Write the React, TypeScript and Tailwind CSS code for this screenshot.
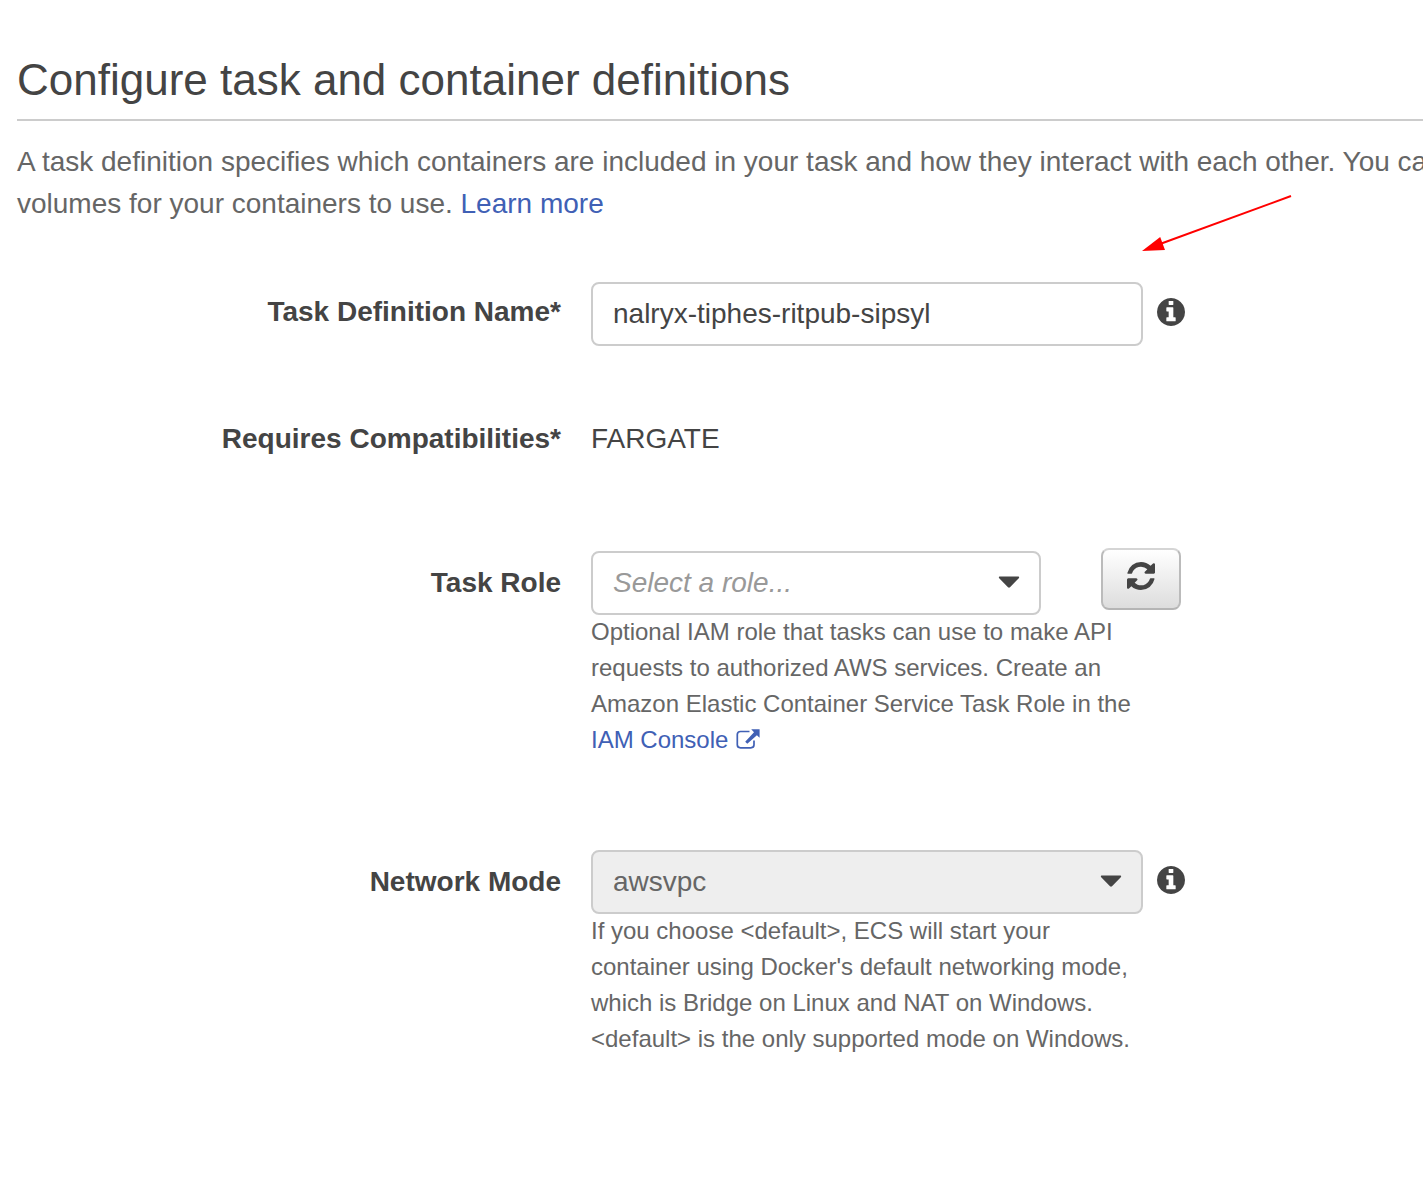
import React from "react";

const FIELD = "h-16 w-full rounded-lg border-2 border-[#ccc] px-5 text-[28px] outline-none";
const ROW = "grid grid-cols-[minmax(0,544px)_minmax(0,1fr)] gap-x-[30px]";
const LABEL = "text-right font-bold";
const HELP = "-mt-px max-w-[552px] text-[24px] leading-9 text-[#666]";

function InfoButton({ label }: { label: string }) {
  return (
    <button type="button" aria-label={label} className="flex h-[60px] shrink-0 items-center self-start">
      <svg viewBox="128 128 1536 1536" className="size-7" fill="currentColor" aria-hidden="true">
        <path d="M1152 1376v-160q0-14-9-23t-23-9h-96v-512q0-14-9-23t-23-9h-320q-14 0-23 9t-9 23v160q0 14 9 23t23 9h96v320h-96q-14 0-23 9t-9 23v160q0 14 9 23t23 9h448q14 0 23-9t9-23zm-128-896v-160q0-14-9-23t-23-9h-192q-14 0-23 9t-9 23v160q0 14 9 23t23 9h192q14 0 23-9t9-23zm640 416q0 209-103 385.5t-279.5 279.5-385.5 103-385.5-103-279.5-279.5-103-385.5 103-385.5 279.5-279.5 385.5-103 385.5 103 279.5 279.5 103 385.5z" />
      </svg>
    </button>
  );
}

function Caret() {
  return (
    <svg
      viewBox="0 0 22 12"
      className="pointer-events-none absolute top-[25px] right-[21px] h-3 w-[22px]"
      fill="#444"
      aria-hidden="true"
    >
      <path d="M1.6 0.5h18.8q1.3 0.5 0.4 1.7l-8.8 9q-1 0.9-2 0l-8.8-9q-0.9-1.2 0.4-1.7z" />
    </svg>
  );
}

function RefreshIcon() {
  return (
    <svg viewBox="128 128 1536 1536" className="size-7" fill="currentColor" aria-hidden="true">
      <path d="M1639 1056q0 5-1 7-64 268-268 434.5t-478 166.5q-146 0-282.5-55t-243.5-157l-129 129q-19 19-45 19t-45-19-19-45v-448q0-26 19-45t45-19h448q26 0 45 19t19 45-19 45l-137 137q71 66 161 102t187 36q134 0 250-65t186-179q11-17 53-117 8-23 30-23h192q13 0 22.5 9.5t9.5 22.5zm25-800v448q0 26-19 45t-45 19h-448q-26 0-45-19t-19-45 19-45l138-138q-148-137-349-137-134 0-250 65t-186 179q-11 17-53 117-8 23-30 23h-199q-13 0-22.5-9.5t-9.5-22.5v-7q65-268 270-434.5t480-166.5q146 0 284 55.5t245 156.5l130-129q19-19 45-19t45 19 19 45z" />
    </svg>
  );
}

function ExternalIcon() {
  return (
    <svg viewBox="0 0 24 20" className="h-5 w-6" fill="none" aria-hidden="true">
      <path
        d="M13.5 2.5H4.5Q1.3 2.5 1.3 5.5V15.8Q1.3 18.8 4.5 18.8H14.8Q18 18.8 18 15.8V11.5"
        stroke="currentColor"
        strokeWidth="1.7"
      />
      <path d="M15.2 0.3H23.6V8.7L20.9 6.2L11.3 14.8L9.2 12.7L18 3.2Z" fill="currentColor" />
    </svg>
  );
}

export default function App() {
  return (
    <main
      className="relative overflow-hidden bg-white pt-[47px] pb-32 pl-[17px] text-[28px] leading-[42px] text-[#444]"
      style={{ fontFamily: '"Liberation Sans", Arial, sans-serif' }}
    >
      <h1 className="border-b-2 border-[#ccc] pb-1.5 text-[44px] leading-[66px]">
        Configure task and container definitions
      </h1>
      <p className="mt-5 whitespace-nowrap text-[#666]">
        A task definition specifies which containers are included in your task and how they interact with each other. You can
        <br />
        volumes for your containers to use.{" "}
        <a href="#learn-more" className="text-[#4060b5]">
          Learn more
        </a>
      </p>

      <svg
        viewBox="0 0 150 58"
        className="pointer-events-none absolute top-[194px] left-[1142px] h-[58px] w-[150px]"
        aria-hidden="true"
      >
        <path d="M149 2L18 50" stroke="#f00" strokeWidth="2" />
        <path d="M0 57L18.2 43L23 56Z" fill="#f00" />
      </svg>

      <form onSubmit={(event) => event.preventDefault()}>
        <div className={`${ROW} mt-[57px]`}>
          <label htmlFor="name" className={`${LABEL} leading-[60px]`}>
            Task Definition Name*
          </label>
          <div className="flex gap-[14px]">
            <div className="w-full max-w-[552px]">
              <input id="name" type="text" defaultValue="nalryx-tiphes-ritpub-sipsyl" className={`${FIELD} block`} />
            </div>
            <InfoButton label="About the task definition name" />
          </div>
        </div>

        <div className={`${ROW} mt-[72px]`}>
          <span className={LABEL}>Requires Compatibilities*</span>
          <span>FARGATE</span>
        </div>

        <div className={`${ROW} mt-[88px]`}>
          <label htmlFor="role" className={`${LABEL} leading-[70px]`}>
            Task Role
          </label>
          <div>
            <div className="flex h-[67px] items-end gap-[60px]">
              <div className="relative w-full max-w-[450px]">
                <select id="role" defaultValue="" className={`${FIELD} block appearance-none bg-white text-[#999] italic`}>
                  <option value="">Select a role...</option>
                </select>
                <Caret />
              </div>
              <button
                type="button"
                aria-label="Refresh roles"
                className="flex h-[62px] w-20 shrink-0 justify-center self-start rounded-lg border-2 border-t-[#d5d5d5] border-r-[#bbb] border-b-[#b5b5b5] border-l-[#bbb] bg-linear-to-b from-white to-[#ddd] pt-3"
              >
                <RefreshIcon />
              </button>
            </div>
            <p className={HELP}>
              Optional IAM role that tasks can use to make API requests to authorized AWS services. Create an Amazon Elastic
              Container Service Task Role in the{" "}
              <a href="#iam-console" className="inline-flex gap-2 align-top text-[#4060b5]">
                IAM Console
                <span className="pt-[7px]">
                  <ExternalIcon />
                </span>
              </a>
            </p>
          </div>
        </div>

        <div className={`${ROW} mt-[92px]`}>
          <label htmlFor="network" className={`${LABEL} leading-[64px]`}>
            Network Mode
          </label>
          <div>
            <div className="flex gap-[14px]">
              <div className="relative w-full max-w-[552px]">
                <select
                  id="network"
                  disabled
                  defaultValue="awsvpc"
                  className={`${FIELD} block appearance-none bg-[#eee] text-[#666] opacity-100`}
                >
                  <option>awsvpc</option>
                </select>
                <Caret />
              </div>
              <InfoButton label="About the network mode" />
            </div>
            <p className={HELP}>
              If you choose &lt;default&gt;, ECS will start your container using Docker's default networking mode, which is
              Bridge on Linux and NAT on Windows. &lt;default&gt; is the only supported mode on Windows.
            </p>
          </div>
        </div>
      </form>
    </main>
  );
}
